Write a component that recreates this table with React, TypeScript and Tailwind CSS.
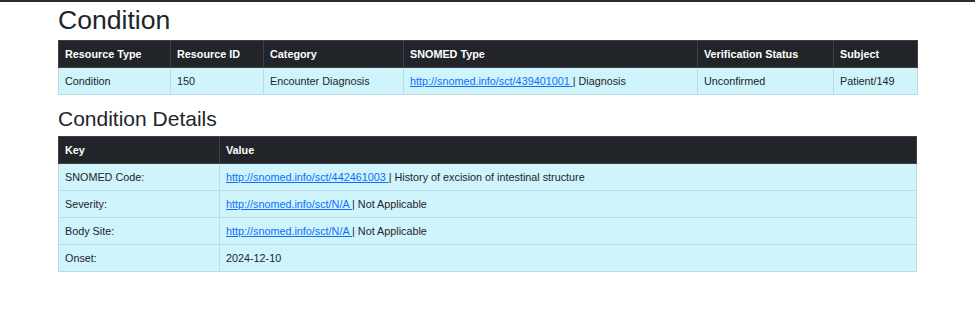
import React from "react";

const conditionCols = [
  { label: "Resource Type", w: "w-[112px]" },
  { label: "Resource ID", w: "w-[93px]" },
  { label: "Category", w: "w-[140px]" },
  { label: "SNOMED Type", w: "w-[294px]" },
  { label: "Verification Status", w: "w-[136px]" },
  { label: "Subject", w: "w-[84px]" },
];

const details = [
  { key: "SNOMED Code:", link: "http://snomed.info/sct/442461003", text: "History of excision of intestinal structure" },
  { key: "Severity:", link: "http://snomed.info/sct/N/A", text: "Not Applicable" },
  { key: "Body Site:", link: "http://snomed.info/sct/N/A", text: "Not Applicable" },
  { key: "Onset:", link: null, text: "2024-12-10" },
];

const th = "border border-[#3d4247] px-[6px] py-[5px] text-left font-bold leading-[16px]";
const td = "border border-[#badce3] px-[6px] py-[5px] leading-[16px]";

function SnomedLink({ href }: { href: string }) {
  return (
    <a href="#" className="text-[#0d6efd] underline">
      {href}{" "}
    </a>
  );
}

export default function App() {
  return (
    <div className="w-[975px] h-[310px] bg-white text-[#212529] font-['Liberation_Sans',Arial,sans-serif] overflow-hidden">
      <div className="h-[2px] bg-[#2a2c30]" />
      <div className="px-[58px]">
        <h2 className="mt-[3px] mb-[4px] text-[26.6px] leading-[31px] font-normal">Condition</h2>
        <table className="w-[859px] table-fixed border-collapse text-[10.8px]">
          <thead>
            <tr className="bg-[#212529] text-white">
              {conditionCols.map((c) => (
                <th key={c.label} className={`${th} ${c.w}`}>
                  {c.label}
                </th>
              ))}
            </tr>
          </thead>
          <tbody>
            <tr className="bg-[#cff4fc]">
              <td className={td}>Condition</td>
              <td className={td}>150</td>
              <td className={td}>Encounter Diagnosis</td>
              <td className={td}>
                <SnomedLink href="http://snomed.info/sct/439401001" />| Diagnosis
              </td>
              <td className={td}>Unconfirmed</td>
              <td className={td}>Patient/149</td>
            </tr>
          </tbody>
        </table>

        <h3 className="mt-[11px] mb-[5px] text-[21px] leading-[25px] font-normal">Condition Details</h3>
        <table className="w-[859px] table-fixed border-collapse text-[10.8px]">
          <thead>
            <tr className="bg-[#212529] text-white">
              <th className={`${th} w-[161px]`}>Key</th>
              <th className={th}>Value</th>
            </tr>
          </thead>
          <tbody>
            {details.map((d) => (
              <tr key={d.key} className="bg-[#cff4fc]">
                <td className={td}>{d.key}</td>
                <td className={td}>
                  {d.link ? (
                    <>
                      <SnomedLink href={d.link} />| {d.text}
                    </>
                  ) : (
                    d.text
                  )}
                </td>
              </tr>
            ))}
          </tbody>
        </table>
      </div>
    </div>
  );
}
